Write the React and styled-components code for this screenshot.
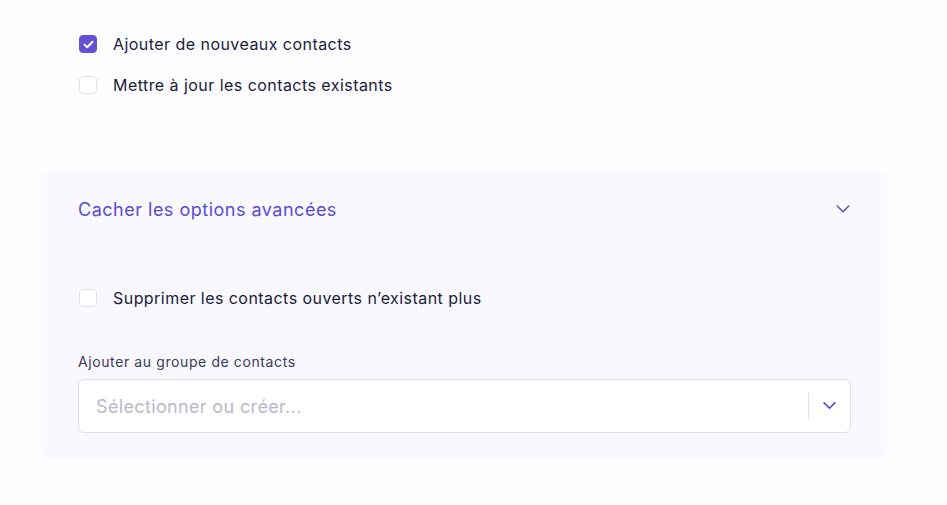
import React, { useState } from "react";
import styled, { createGlobalStyle } from "styled-components";

const GlobalStyle = createGlobalStyle`
  html, body {
    margin: 0;
    padding: 0;
    background: #fdfcff;
    font-family: "Inter", "Liberation Sans", sans-serif;
    color: #23253f;
  }
`;

function CheckIcon() {
  return (
    <svg width="11" height="9" viewBox="0 0 11 9" fill="none">
      <path
        d="M1.5 4.6L4.2 7.2L9.5 1.8"
        stroke="#ffffff"
        strokeWidth="2"
        strokeLinecap="round"
        strokeLinejoin="round"
      />
    </svg>
  );
}

function Chevron({ size = 14, weight = 1.5 }) {
  return (
    <svg width={size} height={size * 0.55} viewBox="0 0 14 8" fill="none">
      <path
        d="M1 1L7 7L13 1"
        stroke="#5a4bd3"
        strokeWidth={weight}
        strokeLinecap="round"
        strokeLinejoin="round"
      />
    </svg>
  );
}

function CheckRow({ label, defaultChecked }) {
  const [checked, setChecked] = useState(!!defaultChecked);
  return (
    <StyledRow onClick={() => setChecked(!checked)}>
      <StyledBox checked={checked}>{checked && <CheckIcon />}</StyledBox>
      <StyledLabel>{label}</StyledLabel>
    </StyledRow>
  );
}

export default function App() {
  return (
    <>
      <GlobalStyle />
      <StyledPage>
        <StyledList>
          <CheckRow label="Ajouter de nouveaux contacts" defaultChecked />
          <CheckRow label="Mettre à jour les contacts existants" />
        </StyledList>

        <StyledPanel>
          <StyledPanelHead>
            <StyledPanelTitle>Cacher les options avancées</StyledPanelTitle>
            <Chevron size={14} />
          </StyledPanelHead>

          <StyledPanelBody>
            <CheckRow label="Supprimer les contacts ouverts n’existant plus" />

            <StyledField>
              <StyledFieldLabel>Ajouter au groupe de contacts</StyledFieldLabel>
              <StyledSelect>
                <StyledPlaceholder>Sélectionner ou créer...</StyledPlaceholder>
                <StyledDivider />
                <StyledSelectIcon>
                  <Chevron size={13} weight={1.9} />
                </StyledSelectIcon>
              </StyledSelect>
            </StyledField>
          </StyledPanelBody>
        </StyledPanel>
      </StyledPage>
    </>
  );
}

const StyledPage = styled.div`
  width: 947px;
  height: 505px;
  box-sizing: border-box;
  padding: 35px 61px 0 42px;
`;

const StyledList = styled.div`
  display: flex;
  flex-direction: column;
  gap: 23px;
  padding-left: 37px;
`;

const StyledRow = styled.div`
  display: flex;
  align-items: center;
  gap: 16px;
  height: 18px;
  cursor: pointer;
`;

const StyledBox = styled.div`
  box-sizing: border-box;
  width: 18px;
  height: 18px;
  border-radius: 4px;
  display: flex;
  align-items: center;
  justify-content: center;
  background: ${({ checked }) => (checked ? "#6352d1" : "#ffffff")};
  border: 1px solid ${({ checked }) => (checked ? "#6352d1" : "#e2e0ec")};
`;

const StyledLabel = styled.span`
  font-size: 16px;
  font-weight: 400;
  letter-spacing: 0.45px;
  color: #1a1c38;
`;

const StyledPanel = styled.div`
  margin-top: 79px;
  width: 844px;
  height: 283px;
  box-sizing: border-box;
  background: #f9f8fe;
  border-radius: 8px;
  box-shadow: 0 0 6px 2px #f9f8fe;
  padding: 24px 35px 0 36px;
`;

const StyledPanelHead = styled.div`
  display: flex;
  align-items: center;
  justify-content: space-between;
  height: 24px;
  padding-right: 1px;
`;

const StyledPanelTitle = styled.span`
  font-size: 18px;
  font-weight: 400;
  letter-spacing: 0.5px;
  color: #5a4bd3;
`;

const StyledPanelBody = styled.div`
  display: flex;
  flex-direction: column;
  padding-top: 68px;
  gap: 46px;
  padding-left: 1px;
`;

const StyledField = styled.div`
  display: flex;
  flex-direction: column;
  gap: 9px;
  margin-left: -1px;
`;

const StyledFieldLabel = styled.span`
  font-size: 14px;
  color: #3a3c55;
  letter-spacing: 0.6px;
`;

const StyledSelect = styled.div`
  box-sizing: border-box;
  display: flex;
  align-items: center;
  height: 54px;
  background: #ffffff;
  border: 1px solid #e1dfec;
  border-radius: 6px;
  padding-left: 17px;
`;

const StyledPlaceholder = styled.span`
  flex: 1;
  font-size: 18px;
  color: #bab7ca;
  letter-spacing: 0.35px;
`;

const StyledDivider = styled.div`
  width: 1px;
  height: 28px;
  background: #e4e2ee;
`;

const StyledSelectIcon = styled.div`
  width: 41px;
  display: flex;
  align-items: center;
  justify-content: center;
`;
